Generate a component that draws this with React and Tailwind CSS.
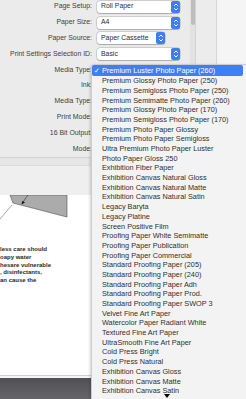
import React from 'react';

const settingRows = [
  { label: 'Page Setup:', value: 'Roll Paper', width: 'w-[83px]' },
  { label: 'Paper Size:', value: 'A4', width: 'w-[83px]' },
  { label: 'Paper Source:', value: 'Paper Cassette', width: 'w-[68px]' },
  { label: 'Print Settings Selection ID:', value: 'Basic', width: 'w-[83px]' },
  { label: 'Media Type:' },
  { label: 'Ink:' },
  { label: 'Media Type:' },
  { label: 'Print Mode:' },
  { label: '16 Bit Output:' },
  { label: 'Mode:' },
];

const mediaTypes = [
  'Premium Glossy Photo Paper (250)',
  'Premium Semigloss Photo Paper (250)',
  'Premium Semimatte Photo Paper (260)',
  'Premium Glossy Photo Paper (170)',
  'Premium Semigloss Photo Paper (170)',
  'Premium Photo Paper Glossy',
  'Premium Photo Paper Semigloss',
  'Ultra Premium Photo Paper Luster',
  'Photo Paper Gloss 250',
  'Exhibition Fiber Paper',
  'Exhibition Canvas Natural Gloss',
  'Exhibition Canvas Natural Matte',
  'Exhibition Canvas Natural Satin',
  'Legacy Baryta',
  'Legacy Platine',
  'Screen Positive Film',
  'Proofing Paper White Semimatte',
  'Proofing Paper Publication',
  'Proofing Paper Commercial',
  'Standard Proofing Paper (205)',
  'Standard Proofing Paper (240)',
  'Standard Proofing Paper Adh',
  'Standard Proofing Paper Prod.',
  'Standard Proofing Paper SWOP 3',
  'Velvet Fine Art Paper',
  'Watercolor Paper Radiant White',
  'Textured Fine Art Paper',
  'UltraSmooth Fine Art Paper',
  'Cold Press Bright',
  'Cold Press Natural',
  'Exhibition Canvas Gloss',
  'Exhibition Canvas Matte',
  'Exhibition Canvas Satin',
];

const docLines = ['less care should', 'oapy water', 'hesare vulnerable', ', disinfectants,', 'an cause the'];

const Stepper = () => (
  <span className="flex h-full w-[9px] items-center justify-center rounded-[2px] bg-[#3b7ff3]">
    <svg width="6" height="10" viewBox="0 0 6 10" fill="none" stroke="white" strokeWidth="1" strokeLinecap="round" strokeLinejoin="round">
      <polyline points="1.5,3.5 3,2 4.5,3.5" />
      <polyline points="1.5,6.5 3,8 4.5,6.5" />
    </svg>
  </span>
);

const Popup = ({ value, width }) => (
  <div className={`flex h-[12px] items-center justify-between rounded-[3px] bg-white pl-[4px] text-[#2e2e2e] shadow-[0_0_0_0.5px_rgba(0,0,0,0.22),0_0.5px_1px_rgba(0,0,0,0.18)] ${width}`}>
    <span>{value}</span>
    <Stepper />
  </div>
);

export default function App() {
  return (
    <div className="relative flex h-[399px] w-[246px] overflow-hidden bg-[#ececec] font-['Liberation_Sans',Arial,sans-serif]">
      {/* Left: print dialog settings and preview */}
      <div className="flex w-[190px] flex-col">
        <div className="h-[158px] border-b border-[#d2d2d2] bg-[#ebebeb]">
          <div className="-mt-px flex flex-col text-[6.9px] leading-none">
            {settingRows.map((row, i) => (
              <div key={i} className="flex h-[15.8px] items-center">
                <span className="w-[92px] shrink-0 text-right text-[#404040]">{row.label}</span>
                {row.value && (
                  <div className="ml-[5px]">
                    <Popup value={row.value} width={row.width} />
                  </div>
                )}
              </div>
            ))}
          </div>
        </div>
        <div className="h-[7px] bg-[#e6e6e6]" />
        <div className="h-[30px] border-t border-[#dcdcdc] bg-[#efefef]" />

        {/* Document preview */}
        <div className="h-[180px] bg-white">
          <svg width="90" height="27" viewBox="0 0 90 27" className="block">
            <polygon points="10,0 67,0 67,22 13,8" fill="#ababab" stroke="#4d4d4d" strokeWidth="0.6" />
            <line x1="0" y1="24" x2="12" y2="10" stroke="#6a6a6a" strokeWidth="0.6" />
            <line x1="28" y1="0" x2="23" y2="7" stroke="#333" strokeWidth="0.6" />
            <polygon points="21.5,9.5 22.3,6 25,7.6" fill="#111" />
          </svg>
          <div className="mt-[24px] text-[6px] font-bold leading-[7.8px] text-[#2a2a2a]">
            {docLines.map((line, i) => (
              <div key={i} className="whitespace-pre">{line}</div>
            ))}
          </div>
        </div>
        <div className="h-px bg-[#cfcfcf]" />
        <div className="h-[2px] bg-[#f4f4f4]" />
        <div className="flex-1 bg-gradient-to-b from-[#505055] to-[#646469]" />
      </div>

      {/* Scroll bar */}
      <div className="w-[6px] border-r border-[#d3d3d3] bg-[#e2e2e2]">
        <div className="mx-[0.5px] h-[25px] rounded-b-full bg-[#bdbdbd]" />
      </div>
      <div className="w-[21px] border-r border-[#d6d6d6] bg-[#ececec]" />
      <div className="flex-1 bg-[#f5f5f5]" />

      {/* Media Type pop-up menu */}
      <div className="absolute bottom-0 left-[91px] right-0 top-[64px] rounded-tl-[4px] border-l border-t border-[#cdcdcd] bg-[#f3f3f3] pr-[3px] text-[7.3px] leading-none text-[#303030] shadow-[-1px_1px_3px_rgba(0,0,0,0.18)]">
        <div className="flex h-[11px] items-center whitespace-nowrap rounded-[2px] bg-[#3d80f2] pl-[2px] text-white">
          <span className="w-[8px] text-[7px]">✓</span>
          <span>Premium Luster Photo Paper (260)</span>
        </div>
        {mediaTypes.map((name) => (
          <div key={name} className="flex h-[9.7px] items-center whitespace-nowrap pl-[10px]">
            {name}
          </div>
        ))}
        <div className="absolute bottom-[1px] left-[72px] h-0 w-0 border-l-[3px] border-r-[3px] border-t-[4px] border-l-transparent border-r-transparent border-t-black" />
      </div>
    </div>
  );
}
